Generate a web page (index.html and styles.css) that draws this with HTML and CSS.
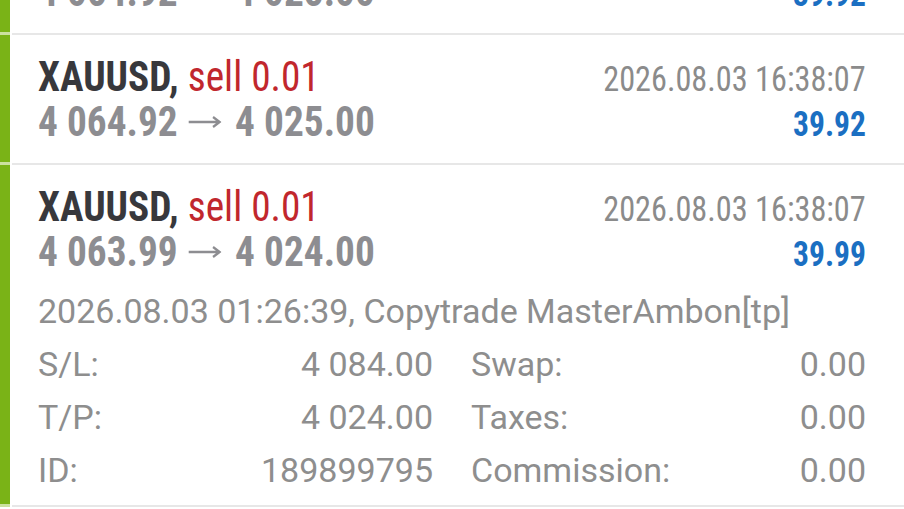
FILE: index.html
```html
<!DOCTYPE html>
<html lang="en">
<head>
  <meta charset="UTF-8" />
  <title>History</title>
  <link rel="stylesheet" href="styles.css">
</head>
<body>
  <div class="list">
    <div class="trade">
      <div class="mark"></div>
      <div class="body">
        <div class="line">
          <span class="head"><b>XAUUSD,</b> <span class="sell">sell 0.01</span></span>
          <span class="time">2026.08.03 16:38:07</span>
        </div>
        <div class="line">
          <span class="price">4 064.92 <svg class="arrow" viewBox="0 0 36 14"><path d="M1 7H34M27 2L34 7L27 12"/></svg> 4 025.00</span>
          <span class="profit">39.92</span>
        </div>
      </div>
    </div>

    <div class="trade">
      <div class="mark"></div>
      <div class="body">
        <div class="line">
          <span class="head"><b>XAUUSD,</b> <span class="sell">sell 0.01</span></span>
          <span class="time">2026.08.03 16:38:07</span>
        </div>
        <div class="line">
          <span class="price">4 064.92 <svg class="arrow" viewBox="0 0 36 14"><path d="M1 7H34M27 2L34 7L27 12"/></svg> 4 025.00</span>
          <span class="profit">39.92</span>
        </div>
      </div>
    </div>

    <div class="trade open">
      <div class="mark"></div>
      <div class="body">
        <div class="line">
          <span class="head"><b>XAUUSD,</b> <span class="sell">sell 0.01</span></span>
          <span class="time">2026.08.03 16:38:07</span>
        </div>
        <div class="line">
          <span class="price">4 063.99 <svg class="arrow" viewBox="0 0 36 14"><path d="M1 7H34M27 2L34 7L27 12"/></svg> 4 024.00</span>
          <span class="profit">39.99</span>
        </div>
        <div class="details">
          <div class="comment">2026.08.03 01:26:39, Copytrade MasterAmbon[tp]</div>
          <div class="pair"><span>S/L:</span><span>4 084.00</span></div>
          <div class="pair"><span>Swap:</span><span>0.00</span></div>
          <div class="pair"><span>T/P:</span><span>4 024.00</span></div>
          <div class="pair"><span>Taxes:</span><span>0.00</span></div>
          <div class="pair"><span>ID:</span><span>189899795</span></div>
          <div class="pair"><span>Commission:</span><span>0.00</span></div>
        </div>
      </div>
    </div>
  </div>
</body>
</html>
```

FILE: styles.css
```css
body {
  margin: 0;
  background-color: #ffffff;
  font-family: Roboto, "Noto Sans", sans-serif;
  overflow: hidden;
}

.list {
  margin-top: -95px;
}

.trade {
  display: flex;
}

.mark {
  width: 10px;
  background-color: #7ab317;
  border-bottom: 3px solid #cbe19f;
  flex-shrink: 0;
}

.body {
  flex: 1;
  margin-left: 2px;
  padding: 19px 38px 19px 26px;
  border-bottom: 2px solid #e7e7e7;
}

.trade.open .body {
  padding-bottom: 8px;
}

/* condensed width is not narrow enough, so squeeze a bit more */
.line {
  display: flex;
  justify-content: space-between;
  align-items: baseline;
  height: 45px;
  line-height: 45px;
  font-stretch: condensed;
}

.head,
.price {
  display: inline-block;
  transform: scaleX(0.936);
  transform-origin: left center;
  white-space: nowrap;
}

.time,
.profit {
  display: inline-block;
  transform-origin: right center;
  white-space: nowrap;
}

.head {
  font-size: 42px;
  color: #38383c;
}

.head b {
  font-weight: bold;
}

.sell {
  color: #c1272d;
}

.price {
  font-size: 42px;
  font-weight: bold;
  color: #8d8d91;
}

.arrow {
  width: 36px;
  height: 14px;
  margin: 0 5px 0 1px;
  vertical-align: 7px;
  fill: none;
  stroke: #8d8d91;
  stroke-width: 2.5;
}

.time {
  font-size: 35px;
  color: #8b8b8b;
  transform: scaleX(0.922);
}

.profit {
  font-size: 35px;
  font-weight: bold;
  color: #1b6fc2;
  transform: scaleX(0.9);
}

.details {
  margin-top: 11px;
  display: grid;
  grid-template-columns: 1fr 1fr;
  column-gap: 38px;
  font-size: 34px;
  line-height: 53px;
  color: #8e8e8e;
}

.comment {
  grid-column: 1 / 3;
}

.pair {
  display: flex;
  justify-content: space-between;
}
```
